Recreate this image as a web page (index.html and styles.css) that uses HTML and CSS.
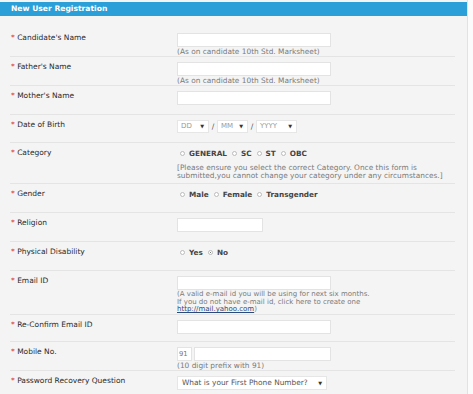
FILE: index.html
```html
<!DOCTYPE html>
<html lang="en">
<head>
  <meta charset="UTF-8">
  <title>New User Registration</title>
  <link rel="stylesheet" href="styles.css">
</head>
<body>
  <div class="panel">
    <!-- Header -->
    <div class="panel-head">New User Registration</div>

    <div class="panel-body">
      <div class="row">
        <div class="label"><span class="req">*</span> Candidate's Name</div>
        <div class="field">
          <div class="input"></div>
          <div class="note">(As on candidate 10th Std. Marksheet)</div>
        </div>
      </div>

      <div class="row">
        <div class="label"><span class="req">*</span> Father's Name</div>
        <div class="field">
          <div class="input"></div>
          <div class="note">(As on candidate 10th Std. Marksheet)</div>
        </div>
      </div>

      <div class="row">
        <div class="label"><span class="req">*</span> Mother's Name</div>
        <div class="field">
          <div class="input"></div>
        </div>
      </div>

      <div class="row row-dob">
        <div class="label"><span class="req">*</span> Date of Birth</div>
        <div class="field dob">
          <div class="select sel-dd">DD <span class="arrow">&#9660;</span></div>
          <span class="slash">/</span>
          <div class="select sel-mm">MM <span class="arrow">&#9660;</span></div>
          <span class="slash">/</span>
          <div class="select sel-yy">YYYY <span class="arrow">&#9660;</span></div>
        </div>
      </div>

      <div class="row row-cat">
        <div class="label"><span class="req">*</span> Category</div>
        <div class="field">
          <div class="radios">
            <span class="radio"></span><b>GENERAL</b>
            <span class="radio"></span><b>SC</b>
            <span class="radio"></span><b>ST</b>
            <span class="radio"></span><b>OBC</b>
          </div>
          <div class="note note-cat">[Please ensure you select the correct Category. Once this form is<br>submitted,you cannot change your category under any circumstances.]</div>
        </div>
      </div>

      <div class="row">
        <div class="label"><span class="req">*</span> Gender</div>
        <div class="field">
          <div class="radios">
            <span class="radio"></span><b>Male</b>
            <span class="radio"></span><b>Female</b>
            <span class="radio"></span><b>Transgender</b>
          </div>
        </div>
      </div>

      <div class="row">
        <div class="label"><span class="req">*</span> Religion</div>
        <div class="field">
          <div class="input input-short"></div>
        </div>
      </div>

      <div class="row">
        <div class="label"><span class="req">*</span> Physical Disability</div>
        <div class="field">
          <div class="radios">
            <span class="radio"></span><b>Yes</b>
            <span class="radio checked"></span><b>No</b>
          </div>
        </div>
      </div>

      <div class="row row-email">
        <div class="label"><span class="req">*</span> Email ID</div>
        <div class="field">
          <div class="input"></div>
          <div class="note note-email">(A valid e-mail id you will be using for next six months.<br>
            If you do not have e-mail id, click here to create one<br>
            <a href="#">http://mail.yahoo.com</a>)</div>
        </div>
      </div>

      <div class="row row-short">
        <div class="label"><span class="req">*</span> Re-Confirm Email ID</div>
        <div class="field">
          <div class="input"></div>
        </div>
      </div>

      <div class="row row-short">
        <div class="label"><span class="req">*</span> Mobile No.</div>
        <div class="field">
          <div class="mobile">
            <div class="prefix">91</div>
            <div class="input input-mobile"></div>
          </div>
          <div class="note">(10 digit prefix with 91)</div>
        </div>
      </div>

      <div class="row row-last">
        <div class="label"><span class="req">*</span> Password Recovery Question</div>
        <div class="field">
          <div class="select sel-question">What is your First Phone Number? <span class="arrow">&#9660;</span></div>
        </div>
      </div>
    </div>
  </div>
</body>
</html>
```

FILE: styles.css
```css
* {
  box-sizing: border-box;
}

body {
  margin: 0;
  background: #fbfbfb;
  font-family: "DejaVu Sans", Verdana, sans-serif;
  color: #333;
}

/* Panel */
.panel {
  width: 468px;
  height: 394px;
  padding-top: 2px;
  background: #f4f4f4;
  border-right: 1px solid #e2e2e2;
  overflow: hidden;
}

.panel-head {
  height: 14px;
  line-height: 14px;
  padding-left: 11px;
  background: #2a9fd8;
  color: #fff;
  font-size: 7.6px;
  font-weight: bold;
}

.panel-body {
  padding-top: 12px;
}

/* Rows */
.row {
  display: grid;
  grid-template-columns: 167px 1fr;
  min-height: 29px;
  margin: 0 12px 0 10px;
  padding-top: 5px;
  border-bottom: 1px solid #e4e4e4;
}

.row-dob { min-height: 28px; }
.row-cat { min-height: 41px; }
.row-email { min-height: 42px; }
.row-short { min-height: 27px; }
.row-last { border-bottom: none; }

.label {
  font-size: 7.5px;
  line-height: 10px;
  color: #2a2a2a;
  padding-left: 1px;
}

.req {
  color: #d9302c;
}

/* Fields */
.input {
  width: 154px;
  height: 14px;
  background: #fff;
  border: 1px solid #e3e3e3;
}

.input-short { width: 86px; }

.mobile {
  display: flex;
  gap: 2px;
}

.prefix {
  width: 15px;
  height: 14px;
  background: #fff;
  border: 1px solid #e3e3e3;
  font-size: 6.8px;
  line-height: 12px;
  color: #777;
  padding-left: 1px;
}

.input-mobile { width: 137px; }

.note {
  font-size: 7.4px;
  line-height: 8px;
  color: #7a7a7a;
  margin-top: 1px;
  white-space: nowrap;
}

.note-cat {
  margin-top: 6px;
}

.note-email {
  font-size: 7px;
  line-height: 7.6px;
  margin-top: 1px;
}

.note a {
  color: #2a4a7c;
  text-decoration: underline;
}

/* Selects */
.dob {
  display: flex;
  align-items: center;
  height: 13px;
}

.select {
  height: 13px;
  background: #fff;
  border: 1px solid #e6e6e6;
  font-size: 7px;
  line-height: 11px;
  color: #999;
  padding-left: 3px;
  display: flex;
  justify-content: space-between;
  padding-right: 4px;
}

.arrow {
  color: #333;
  font-size: 5px;
}

.sel-dd { width: 32px; }
.sel-mm { width: 31px; }
.sel-yy { width: 41px; }

.slash {
  font-size: 7.5px;
  color: #555;
  width: 8px;
  text-align: center;
}

.sel-question {
  width: 150px;
  height: 14px;
  line-height: 12px;
  font-size: 7.4px;
  color: #555;
  padding-left: 4px;
}

/* Radios */
.radios {
  display: flex;
  align-items: center;
  height: 10px;
  padding-left: 3px;
  font-size: 7.3px;
  color: #444;
}

.radios b {
  margin-right: 5px;
}

.radio {
  width: 5px;
  height: 5px;
  margin-right: 4px;
  border: 1px solid #bbb;
  border-radius: 50%;
  background: #fff;
}

.radio.checked {
  background: radial-gradient(circle, #777 40%, #fff 45%);
}
```
